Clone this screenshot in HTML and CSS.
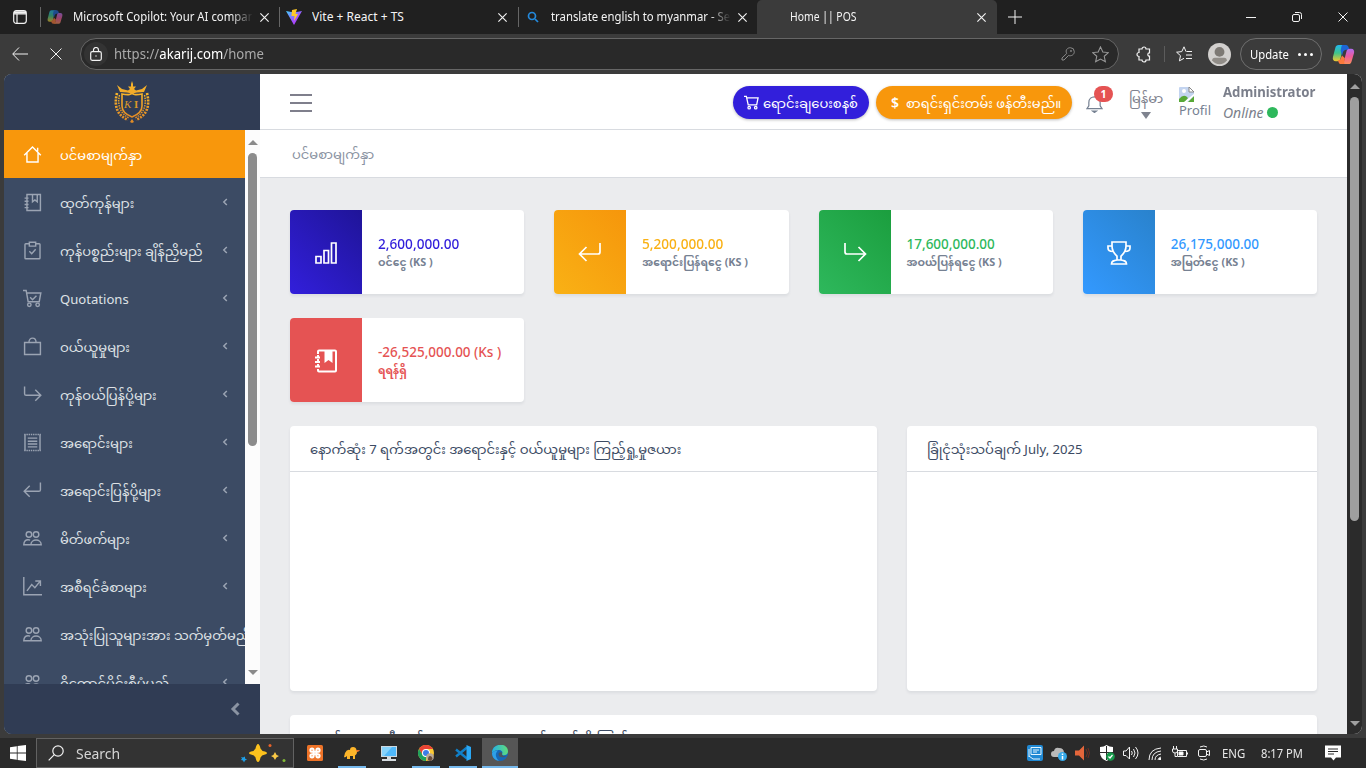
FILE: index.html
```html
<!DOCTYPE html>
<html lang="my">
<head>
<meta charset="utf-8">
<title>Home || POS</title>
<link rel="stylesheet" href="styles.css">
</head>
<body>
<svg class="defs" width="0" height="0">
  <defs>
    <linearGradient id="cpA" x1="0" y1="0" x2="0" y2="1"><stop offset="0" stop-color="#21b8f2"/><stop offset=".5" stop-color="#3fc38a"/><stop offset="1" stop-color="#f2c72f"/></linearGradient>
    <linearGradient id="cpB" x1="0" y1="0" x2="0" y2="1"><stop offset="0" stop-color="#b06cf0"/><stop offset=".5" stop-color="#ee5a9a"/><stop offset="1" stop-color="#fa8f5a"/></linearGradient>
    <linearGradient id="gold" x1="0" y1="0" x2="0" y2="1"><stop offset="0" stop-color="#f8b62a"/><stop offset="1" stop-color="#e08a26"/></linearGradient>
    <linearGradient id="edge" x1="0" y1="0" x2="1" y2="0"><stop offset="0" stop-color="#27b0e4"/><stop offset="1" stop-color="#5fdc7a"/></linearGradient>
    <linearGradient id="vite" x1="0" y1="0" x2="1" y2="1"><stop offset="0" stop-color="#41d1ff"/><stop offset=".6" stop-color="#a44cff"/><stop offset="1" stop-color="#bd34fe"/></linearGradient>
    <symbol id="copilot" viewBox="0 0 24 24">
      <path fill="url(#cpA)" d="M7 2h8c-2 0-3 1-3.500 3L9 16c-.5 2-1.500 3-3.500 3H4c-2.500 0-3.600-2-3-4.500L3.500 5C4 3 5 2 7 2z"/>
      <path fill="#1d66d6" d="M11 2h3.500c2 0 2.500 1.500 3 3l.6 2H15c-2 0-3 1-3.500 2.500L10.500 13 9 8c1-4 .5-5 2-6z"/>
      <path fill="url(#cpB)" d="M17 22H9c2 0 3-1 3.500-3L15 9c.5-2 1.500-3 3.500-3H20c2.500 0 3.600 2 3 4.500L20.500 19c-.5 2-1.500 3-3.500 3z"/>
      <path fill="#fb7a3c" d="M13 22H9.500c-2 0-2.500-1.500-3-3L6 18c2 0 3-1 3.500-3l1-2 3 3c-1 4-.500 5-.500 6z"/>
    </symbol>
    <symbol id="x" viewBox="0 0 12 12"><path d="M1.500 1.500l9 9M10.500 1.500l-9 9"/></symbol>
    <symbol id="book" viewBox="0 0 24 24"><path d="M5 5V2h17v20H5v-2.500M2 6.500h5M2 10.500h5M2 14.500h5M2 18.500h5M5 5v15M12 2v9l3-2.300 3 2.300V2"/></symbol>
    <symbol id="bookFill" viewBox="0 0 24 24"><path d="M4 5V2.500q0-1 1-1h16q1 0 1 1v19q0 1-1 1H5q-1 0-1-1V20" stroke-width="2"/><path d="M1 8.500h5M1 13h5M1 17.500h5" stroke-width="2"/><path d="M4 6v2M4 10v2M4 15v2" stroke-width="2"/><path d="M10.500 2v12l4-3 4 3V2z" fill="#fff" stroke="none"/></symbol>
    <symbol id="people" viewBox="0 0 24 24"><circle cx="7.500" cy="7" r="3.500"/><circle cx="16.500" cy="7" r="3.500"/><path d="M10 20h13c0-8-13-8-13 0zM10 20H1c0-5 2.500-7.200 8-6"/></symbol>
    <symbol id="ret" viewBox="0 0 24 24"><path d="M22 2v9q0 2-2 2H2M8.500 6l-7 7 7 7"/></symbol>
    <symbol id="fwd" viewBox="0 0 24 24"><path d="M2 2v9q0 2 2 2h18M15.500 6l7 7-7 7"/></symbol>
    <symbol id="chev" viewBox="0 0 8 10"><path d="M5.800 2L2.800 5l3 3"/></symbol>
  </defs>
</svg>

<div class="tabs">
  <svg class="workspace" viewBox="0 0 14 14"><rect x=".7" y=".7" width="12.600" height="12.600" rx="2.500"/><path d="M1 4h12M4 4v9" /><path d="M1 2.500h12" stroke-width="2.500"/></svg>
  <div class="tab t1"><svg class="fav dim"><use href="#copilot"/></svg><span class="ttl fade"><b class="w-t1">Microsoft Copilot: Your AI compan</b></span><svg class="ln tx"><use href="#x"/></svg></div>
  <div class="tab t2"><svg class="fav" viewBox="0 0 16 16"><path fill="url(#vite)" d="M0 2l8 14 8-14-8 1.500z"/><path fill="#ffc928" d="M6 1l5-1-1.500 5H12l-4 7 .5-5H5.500z"/></svg><span class="ttl"><b class="w-t2">Vite + React + TS</b></span><svg class="ln tx"><use href="#x"/></svg></div>
  <div class="tab t3"><svg class="fav mag" viewBox="0 0 16 16"><circle cx="7" cy="7" r="3.500"/><path d="M10 10l3 3"/></svg><span class="ttl fade"><b class="w-t3">translate english to myanmar - Se</b></span><svg class="ln tx"><use href="#x"/></svg></div>
  <div class="tab t4 active"><span class="ttl"><b class="w-t4">Home || POS</b></span><svg class="ln tx"><use href="#x"/></svg></div>
  <svg class="ln plus" viewBox="0 0 14 14"><path d="M7 0v14M0 7h14"/></svg>
  <div class="winbtns">
    <svg class="ln" viewBox="0 0 10 10"><path d="M0 5.500h10"/></svg>
    <svg class="ln" viewBox="0 0 10 10"><rect x=".5" y="2.500" width="7" height="7" rx="1.500"/><path d="M3 .5h4.500q2 0 2 2V7"/></svg>
    <svg class="ln" viewBox="0 0 10 10"><path d="M.5 .5l9 9M9.500 .5l-9 9"/></svg>
  </div>
</div>

<div class="toolbar">
  <svg class="ln back" viewBox="0 0 16 14"><path d="M16 7H1M7 .5L.7 7 7 13.500"/></svg>
  <svg class="ln stop" viewBox="0 0 12 12"><path d="M.5 .5l11 11M11.500 .5l-11 11"/></svg>
  <div class="address">
    <span class="lock"><svg class="ln" viewBox="0 0 12 14"><rect x=".7" y="4.700" width="10.600" height="8.600" rx="1.500"/><path d="M3.500 4.500V3a2.500 2.500 0 015 0v1.500"/><path d="M5.500 9h1" stroke-width="1.500"/></svg></span>
    <span class="url"><b class="w-url">https://<i>akarij.com</i>/home</b></span>
    <svg class="ln key" viewBox="0 0 14 14"><path d="M7.500 8.500L3 13H1v-2l4.700-4.500C4 3 6.500 .7 9.300 .7A4 4 0 0113.300 4.700C13.300 7.500 10.500 9.500 7.500 8.500z"/><circle cx="10" cy="4" r=".6"/></svg>
    <svg class="ln star" viewBox="0 0 16 16"><path d="M8 .8l2.200 4.800 5.200.6-3.900 3.500 1.100 5.200L8 12.300l-4.600 2.600 1.100-5.200L.6 6.200l5.200-.6z"/></svg>
  </div>
  <svg class="ln ext" viewBox="0 0 16 16"><path d="M3 2.500h3a2 2 0 014 0h3.500v3.800a1.600 1.600 0 100 3.400v3.800H10a2 2 0 01-4 0H3V10a2 2 0 010-4z"/></svg>
  <i class="tsep"></i>
  <svg class="ln favs" viewBox="0 0 17 16"><path d="M10 5.600L8 .8 5.800 5.600.6 6.200l3.900 3.500-1.100 5.200L8 12.300M10.500 5.500H16M10 9h6M10 12.500h6"/></svg>
  <svg class="avatar" viewBox="0 0 22 22"><circle cx="11" cy="11" r="11" fill="#d2d0ce"/><circle cx="11" cy="8.500" r="4.700" fill="#7d7974"/><path d="M4 16.500q0-2.500 2.500-2.500h9q2.500 0 2.500 2.500c-3 5-11 5-14 0z" fill="#918d88"/></svg>
  <div class="update"><b class="w-upd">Update</b><i></i><i></i><i></i></div>
  <svg class="cop"><use href="#copilot"/></svg>
</div>

<div class="view">
  <aside class="side">
    <div class="brand">
      <svg viewBox="0 0 36 42">
        <g fill="none" stroke="url(#gold)">
          <path stroke-width="1.600" d="M8 13q10 2 10-2q0 4 10 2v12q0 7-10 11Q8 32 8 25z"/>
          <path stroke-width="2.600" stroke-dasharray="2 1.200" d="M3 12Q-2 32 14 39M33 12Q38 32 22 39"/>
          <path stroke-width="1.400" stroke-dasharray="1.500 1" d="M5.500 14Q2 30 15 37M30.500 14Q34 30 21 37"/>
        </g>
        <path fill="url(#gold)" d="M6 11L3 4l5 4 6 1.500 2-1.500-2-2.500h3V3l1-3 1 3v2.500h3L20 8l2 1.500L28 8l5-4-3 7-7 .5-5 1-5-1zM16 41l2-3 2 3-2 1z"/>
        <text x="10" y="27" class="mono">K</text><text x="20" y="27" class="mono up1">I</text>
      </svg>
    </div>
    <div class="navwrap">
      <nav class="nav">
        <a class="on"><svg viewBox="0 0 24 24"><path d="M1.500 13L12 2.500 22.500 13M5 10v11.500h14V10M18.500 8V3.500"/></svg><span><b>ပင်မစာမျက်နှာ</b></span></a>
        <a><svg><use href="#book"/></svg><span><b>ထုတ်ကုန်များ</b></span><svg class="ch"><use href="#chev"/></svg></a>
        <a><svg viewBox="0 0 24 24"><path d="M8 3.500H3.500q-1 0-1 1v17q0 1 1 1h17q1 0 1-1v-17q0-1-1-1H16M8 1.500h8v5H8zM8 13l3 3 5-5.500"/></svg><span><b>ကုန်ပစ္စည်းများ ချိန်ညှိမည်</b></span><svg class="ch"><use href="#chev"/></svg></a>
        <a><svg viewBox="0 0 24 24"><path d="M0 2h4l2.500 14h14L22.500 5H5M9 10.500l3 3 5-5"/><circle cx="8" cy="20" r="2.200"/><circle cx="18.500" cy="20" r="2.200"/></svg><span><b>Quotations</b></span><svg class="ch"><use href="#chev"/></svg></a>
        <a><svg viewBox="0 0 24 24"><path d="M2 7h20v15H2zM7.500 7c0-7.500 9-7.500 9 0"/></svg><span><b>ဝယ်ယူမှုများ</b></span><svg class="ch"><use href="#chev"/></svg></a>
        <a><svg><use href="#fwd"/></svg><span><b>ကုန်ဝယ်ပြန်ပို့များ</b></span><svg class="ch"><use href="#chev"/></svg></a>
        <a><svg viewBox="0 0 24 24"><path d="M2.500 2v20M21.500 2v20"/><path d="M1.500 2h21M1.500 22h21" stroke-dasharray="1.800 1"/><path d="M6 6.500h12M6 10.500h12M6 14h12M6 17.500h12"/></svg><span><b>အရောင်းများ</b></span><svg class="ch"><use href="#chev"/></svg></a>
        <a><svg><use href="#ret"/></svg><span><b>အရောင်းပြန်ပို့များ</b></span><svg class="ch"><use href="#chev"/></svg></a>
        <a><svg><use href="#people"/></svg><span><b>မိတ်ဖက်များ</b></span><svg class="ch"><use href="#chev"/></svg></a>
        <a><svg viewBox="0 0 24 24"><path d="M1 0v22.500h23M5 17.500l6-8 4 4 6.500-8M15.500 5H22v6.500"/></svg><span><b>အစီရင်ခံစာများ</b></span><svg class="ch"><use href="#chev"/></svg></a>
        <a><svg><use href="#people"/></svg><span><b>အသုံးပြုသူများအား သက်မှတ်မည်</b></span></a>
        <a><svg><use href="#people"/></svg><span><b>ဂိုတောင်ပိုင်းစီမံမည်</b></span><svg class="ch"><use href="#chev"/></svg></a>
      </nav>
      <div class="sb light"><i class="up"></i><i class="thumb"></i><i class="down"></i></div>
    </div>
    <div class="minimize"><svg viewBox="0 0 10 14"><path d="M8.500 1.500L3 7l5.500 5.500"/></svg></div>
  </aside>

  <section class="page">
    <header class="head">
      <span class="burger"><i></i><i></i><i></i></span>
      <a class="pill blue"><svg viewBox="0 0 16 16"><path d="M0 1.500h2.500L4.500 10.500h9L15 3H3.500"/><circle cx="5.500" cy="13.500" r="1.300"/><circle cx="12.500" cy="13.500" r="1.300"/></svg><b>ရောင်းချပေးစနစ်</b></a>
      <a class="pill orange"><em>$</em><b>စာရင်းရှင်းတမ်း ဖန်တီးမည်။</b></a>
      <span class="bell"><svg viewBox="0 0 18 20"><path d="M1 15.500h16l-2-3V9c0-8-12-8-12 0v3.500z"/><path d="M7 18h4l-2 1.500z"/></svg><i>1</i></span>
      <span class="lang"><b>မြန်မာ</b><i></i></span>
      <span class="pic"><svg viewBox="0 0 16 16"><path fill="#c3d4f0" d="M0 2q0-1 1-1h9l5 5v9q0 1-1 1H1q-1 0-1-1z"/><circle cx="5" cy="5" r="2" fill="#fff"/><path fill="#57a837" d="M0 16v-3q5-6 9-1l-3 4zM9 16l6-6v6z"/><path fill="#fff" d="M5 16L16 7v2l-8 7z"/><path d="M10 1v5h5z" fill="#fff" stroke="#888"/></svg><em>Profile</em></span>
      <span class="user"><strong><b class="us">Administrator</b></strong><em><b class="ol">Online</b><i></i></em></span>
    </header>
    <div class="crumb"><b>ပင်မစာမျက်နှာ</b></div>
    <main>
      <div class="cards">
        <article class="c-blue"><div><svg viewBox="0 0 24 24"><path d="M2 15.500h5V22H2zM10 9.500h4.500V22H10zM17.500 2H22v20h-4.500z"/></svg></div><p><strong><b class="v1">2,600,000.00</b></strong><small><b>ဝင်ငွေ (KS )</b></small></p></article>
        <article class="c-org"><div><svg><use href="#ret"/></svg></div><p><strong><b class="v1">5,200,000.00</b></strong><small><b>အရောင်းပြန်ရငွေ (KS )</b></small></p></article>
        <article class="c-grn"><div><svg><use href="#fwd"/></svg></div><p><strong><b class="v3">17,600,000.00</b></strong><small><b>အဝယ်ပြန်ရငွေ (KS )</b></small></p></article>
        <article class="c-sky"><div><svg viewBox="0 0 24 24"><path d="M5 1h14v4c0 6-3 8-5 10v4h-4v-4C8 13 5 11 5 5zM5 5H1v2c0 3 2 3.500 5 3.500M19 5h4v2c0 3-2 3.500-5 3.500M4.500 23c0-3 2-3.500 5.500-4h4c3.500.5 5.500 1 5.500 4z"/></svg></div><p><strong><b class="v3">26,175,000.00</b></strong><small><b>အမြတ်ငွေ (KS )</b></small></p></article>
        <article class="c-red"><div><svg><use href="#bookFill"/></svg></div><p><strong><b class="v5">-26,525,000.00 (Ks )</b></strong><small><b>ရရန်ရှိ</b></small></p></article>
      </div>
      <div class="panels">
        <section><h2><b>နောက်ဆုံး 7 ရက်အတွင်း အရောင်းနှင့် ဝယ်ယူမှုများ ကြည့်ရှု့မှုဇယား</b></h2></section>
        <section><h2><b class="h2">ခြုံငုံသုံးသပ်ချက် July, 2025</b></h2></section>
      </div>
      <section class="more"><h2><b>လစဉ် ငွေသားစီးဆင်းမှု ပေးချေမှုများ လက်ရောင်းပို့ ကြည့်ရှု့မှု</b></h2></section>
    </main>
  </section>
  <div class="sb dark"><i class="up"></i><i class="thumb"></i><i class="down"></i></div>
</div>

<footer class="taskbar">
  <span class="start"><svg viewBox="0 0 16 16"><path fill="#fff" d="M0 2.200L6.800 1.200V7.600H0zM7.600 1.100L16 0v7.600H7.600zM0 8.400h6.800v6.400L0 13.800zM7.600 8.400H16V16l-8.400-1.100z"/></svg></span>
  <div class="search">
    <svg class="ln sm" viewBox="0 0 16 16"><circle cx="10" cy="6" r="5.200"/><path d="M6.300 9.700L.7 15.300"/></svg>
    <span><b class="sr">Search</b></span>
    <svg class="spark" viewBox="0 0 48 20"><path fill="#fdc21d" d="M19 1q1.500 0 2.500 4.500Q22.500 8 26 8.500q2 .5 2 1.500t-2 1.500q-3.500.5-4.500 3Q20.500 19 19 19t-2.500-4.500q-1-2.500-4.500-3-2-.5-2-1.500t2-1.500q3.500-.5 4.500-3Q17.500 1 19 1z"/><path fill="#f9c846" d="M36 9q.8 3.200 4 4-3.200.8-4 4-.8-3.200-4-4 3.200-.8 4-4z"/><path fill="#1ea0e8" d="M2 14l2 .500 2-1v2l2 1-2 1-1 2-1-2-2-.5 1-1.500z"/><circle cx="31" cy="2.500" r="1.500" fill="#e9622a"/><circle cx="45" cy="17.500" r="1.500" fill="#80b935"/></svg>
  </div>
  <div class="apps">
    <span><svg viewBox="0 0 16 16"><rect width="16" height="16" rx="1.500" fill="#ee7328"/><path fill="none" stroke="#fff" stroke-width="2" d="M5.800 6.800H5a1.600 1.600 0 111.600-1.600v5.600A1.600 1.600 0 115 9.200h6a1.600 1.600 0 11-1.600 1.600V5.200A1.600 1.600 0 1111 6.800H5"/></svg></span>
    <span class="run"><svg viewBox="0 0 16 16"><path fill="#fdb52a" d="M1 8q2-4 5-3 0-3 3-3 3 0 3.500 3l3.500.5-3 1.500q0 3-2 3.500V14H9v-3H6v3H3v-3q-2 2-3 1z"/><path fill="#e9622a" d="M12 5l4 .5-3 1.500z"/></svg></span>
    <span><svg viewBox="0 0 16 16"><path fill="#cdd8df" d="M0 1h16v11H0z"/><path fill="#4fb8fa" d="M1 2h14v9H1z"/><path fill="#86d3fc" d="M1 2h10L3 11H1z"/><path fill="#d6dce0" d="M6 12h4v2h5v2H1v-2h5z"/></svg></span>
    <span class="run"><svg viewBox="0 0 16 16"><circle cx="8" cy="8" r="8" fill="#fcc934"/><path fill="#ea4335" d="M1.070 4a8 8 0 0113.860 0H8L4.500 10z"/><path fill="#1fa15d" d="M1.070 4l3.500 6 3.500 2L8 16A8 8 0 011.070 4z"/><circle cx="8" cy="8" r="4" fill="#fff"/><circle cx="8" cy="8" r="3" fill="#3b7de8"/><circle cx="12" cy="12" r="3.800" fill="#b9a896"/><path fill="#6a4b3a" d="M10 15q0-4 2-4t2.500 3l-2 2z"/></svg></span>
    <span class="run"><svg viewBox="0 0 16 16"><path fill="none" stroke="#1180c9" stroke-width="2.400" d="M12 2.500L1 11.500M12 13.500L1 4.500"/><path fill="#2aa8f5" d="M11.500 0L16 2v12l-4.500 2z"/></svg></span>
    <span class="cur"><svg viewBox="0 0 16 16"><circle cx="8" cy="8" r="8" fill="#1667b8"/><path fill="url(#edge)" d="M0 8C0-2.500 16-3 16 6.500c0 4-6 5-6 2.500 1-1 .5-4-3-4C3 5 1 6.500 0 8z"/><path fill="#2fa0e8" d="M0 8q2-3 6-2.500C3 8 3 12 7 15.900 2.500 15.500 0 12 0 8z"/><path fill="#4a5560" d="M6.500 8.500q1-2 3.500-1c-.5 3 1 4.500 5 3.500-4 2.500-9 1.500-8.500-2.500z"/></svg></span>
  </div>
  <div class="tray">
    <svg viewBox="0 0 16 16"><rect width="16" height="16" rx="2" fill="#2089d4"/><path fill="none" stroke="#e4f5ff" d="M4 2.500h10v7H4zM6 5h6M6 7h4M2 11l4 3h7M2 4v8"/></svg>
    <svg viewBox="0 0 16 16"><path fill="#b9b9b9" d="M0 9q0-3 3-3 1-4 5-3 5 0 5 5l-3 4H3q-3 0-3-3z"/><circle cx="11.500" cy="11.500" r="4.500" fill="#35a9ea"/><path stroke="#fff" stroke-width="1.500" d="M11.500 11v3.500M11.500 8.500V10"/></svg>
    <svg viewBox="0 0 16 16"><path fill="#e4663b" d="M0 5.500h4l5-5v15l-5-5H0z"/><path fill="none" stroke="#6d2f22" d="M11 4q3 4 0 8M13 3q3 5 0 10"/></svg>
    <svg viewBox="0 0 16 16"><path fill="#fff" d="M7.500 0q3 2 6.500 2v6q0 5-6.500 8Q1 13 1 8V2q4 0 6.500-2z"/><path stroke="#2a2a2a" d="M7.500 1v14M1 7.500h13"/><circle cx="11.500" cy="11.500" r="4.300" fill="#169a4b"/><path fill="none" stroke="#fff" stroke-width="1.200" d="M9.500 11.500l1.500 1.500 2.500-3"/></svg>
    <svg class="ln" viewBox="0 0 16 16"><path d="M.5 6H3l3.500-4v12L3 10.500H.5zM8.500 6q1.500 2 0 4M10.500 4q3 4 0 8M12.500 2q5 6 0 12"/></svg>
    <svg class="ln" viewBox="0 0 16 16"><path d="M2 15Q2 4 14 3M5 15q0-8 9-9M8 15q0-5 6-6M11 15q0-2 3-3"/><path d="M12 14h2" stroke-width="2"/></svg>
    <svg class="ln" viewBox="0 0 16 16"><path d="M5.500 5.500h9v6h-9zM15.500 7.500v2M1.500 1v3M4.500 1v3M.5 4h5v2q0 2-2.500 2T.5 6zM3 8v3.500h2"/><path fill="#fff" d="M7 7h4v3H7z"/></svg>
    <svg class="ln" viewBox="0 0 16 16"><rect x="2.500" y="4.500" width="8" height="7" rx="1.500"/><path d="M10.500 7l3-1.500v5l-3-1.500M4 2q4-2 7 0M4 14q4 2 7 0"/></svg>
    <span class="eng"><b class="en">ENG</b></span>
    <span class="time"><b class="tm">8:17 PM</b></span>
    <svg class="note" viewBox="0 0 16 16"><path fill="#fff" d="M0 .5h16v12h-5L8.500 15.500 6 12.500H0z"/><path stroke="#2a2a2a" d="M3 4h10M3 6.500h10M3 9h6"/></svg>
  </div>
</footer>
</body>
</html>
```
FILE: styles.css
```css
* { box-sizing: border-box; }
body { margin: 0; width: 1366px; height: 768px; overflow: hidden; background: #3b3b3b; display: flex; flex-direction: column; font-family: "Noto Sans", "Noto Sans Myanmar", "Padauk", sans-serif; font-size: 13px; }
b { font-weight: inherit; display: inline-block; white-space: nowrap; transform-origin: 0 50%; }
i, em { font-style: normal; }
svg { display: block; flex: none; }
.defs { position: absolute; }
.ln { fill: none; stroke: #f2f2f2; stroke-width: 1; }

/* horizontal condensing for chrome labels */
.w-t1, .w-t3 { transform: scaleX(.945); }
.w-t4 { transform: scaleX(.865); }
.w-url { transform: scaleX(.938); }
.w-upd { transform: scaleX(.94); }
.us { transform: scaleX(.94); }
.tm { transform: scaleX(.93); }
.en { transform: scaleX(.95); }
.sr { transform: scaleX(.93); }
.v1 { transform: scaleX(1.01); }

.tabs { height: 34px; flex: none; background: #202020; display: flex; align-items: center; color: #f4f4f4; font-size: 12px; }
.workspace { width: 14px; height: 14px; margin: 0 13px 0 13px; fill: none; stroke: #f2f2f2; stroke-width: 1.2; }
.tab { display: flex; align-items: center; height: 34px; padding-left: 7px; position: relative; }
.tab:not(.active)::before { content: ""; position: absolute; left: 0; top: 7px; height: 20px; width: 1px; background: #666; }
.t1 { width: 239px; } .t2 { width: 239px; } .t3 { width: 238px; }
.t4 { width: 240px; padding-left: 33px; }
.active { background: #3b3b3b; margin-left: 1px; border-radius: 5px 5px 0 0; }
.fav { width: 16px; height: 16px; margin-right: 10px; }
.dim { opacity: .6; }
.mag { fill: none; stroke: #2389dc; stroke-width: 1.7; }
.ttl { flex: 1; line-height: 34px; overflow: hidden; white-space: nowrap; }
.fade { flex: none; width: 179px; margin-right: 8px; overflow: visible; -webkit-mask-image: linear-gradient(90deg, #000 158px, transparent 180px); mask-image: linear-gradient(90deg, #000 158px, transparent 180px); }
.tx { width: 11px; height: 11px; margin-right: 10px; stroke-width: 1.3; }
.t1 .tx, .t3 .tx { margin: 0; margin-left: -1px; }
.plus { width: 14px; height: 14px; margin-left: 11px; }
.winbtns { margin-left: auto; display: flex; gap: 36px; padding-right: 18px; }
.winbtns svg { width: 10px; height: 10px; }

.toolbar { height: 40px; flex: none; background: #3b3b3b; display: flex; align-items: center; padding: 0 0 0 12px; }
.back { width: 16px; height: 14px; }
.stop { width: 12px; height: 12px; margin-left: 22px; }
.address { width: 1039px; height: 32px; margin-left: 18px; border: 1px solid #666; border-radius: 16px; background: #292929; display: flex; align-items: center; padding-left: 3px; }
.lock { width: 24px; height: 24px; border-radius: 50%; background: #333; display: grid; place-items: center; }
.lock svg { width: 12px; height: 14px; stroke-width: 1.2; }
.url { flex: 1; margin-left: 6px; font-size: 14px; line-height: 30px; color: #aaa; }
.url i { color: #fff; }
.key { width: 14px; height: 14px; stroke: #8a8a8a; }
.star { width: 17px; height: 17px; margin: 0 9px 0 17px; stroke: #999; }
.ext { width: 16px; height: 17px; margin-left: 17px; stroke-width: 1.2; }
.tsep { width: 1px; height: 16px; background: #5c5c5c; margin: 0 11px 0 12px; }
.favs { width: 17px; height: 16px; }
.avatar { width: 23px; height: 23px; margin: 0 9px 0 15px; }
.update { width: 82px; height: 32px; border: 1px solid #6e6e6e; border-radius: 16px; display: flex; align-items: center; color: #fff; font-size: 12px; padding-left: 9px; }
.update b { width: 48px; }
.update i { width: 3px; height: 3px; border-radius: 50%; background: #fff; margin-right: 3px; }
.cop { width: 23px; height: 23px; margin-left: 10px; }

.view { height: 660px; width: 1358px; flex: none; margin-left: 4px; display: flex; border-radius: 8px; overflow: hidden; background: #ebecee; }
.side { width: 256px; display: flex; flex-direction: column; background: #3c4b64; flex: none; }
.brand { height: 56px; flex: none; background: #303c54; display: flex; justify-content: center; padding-top: 7px; }
.brand svg { width: 36px; height: 42px; margin-right: 1px; }
.mono { font: italic 11px "Liberation Serif", serif; fill: #d9962a; }
.up1 { font-style: normal; font-weight: 700; }
.navwrap { height: 554px; display: flex; overflow: hidden; }
.nav { width: 241px; overflow: hidden; }
.nav a { height: 48px; display: flex; align-items: center; padding: 0 16px 0 19px; color: #dfe2e6; font-size: 13.100px; }
.nav a > svg { width: 19px; height: 19px; fill: none; stroke: #9ba4b3; stroke-width: 1.8; }
.nav a span { width: 160px; margin-left: 18px; line-height: 48px; height: 48px; white-space: nowrap; padding-top: 1px; }
.nav a > svg.ch { width: 8px; height: 10px; stroke-width: 1.5; margin-left: 1px; }
.nav .on { background: #f8970c; color: #fff; }
.nav a.on > svg { stroke: #fff; }
.sb { width: 15px; display: flex; flex-direction: column; align-items: center; flex: none; }
.light { background: #fcfcfc; padding: 10px 0 9px; }
.dark { background: #2b2b2b; padding: 10px 0 8px; }
.up { border: 5px solid transparent; border-top: 0; border-bottom: 5px solid #8b8b8b; }
.down { border: 5px solid transparent; border-bottom: 0; border-top: 5px solid #8b8b8b; margin-top: auto; }
.thumb { width: 9px; border-radius: 5px; background: #8b8b8b; margin-top: 8px; }
.light .thumb { height: 293px; }
.dark .thumb { height: 424px; background: #9f9f9f; }
.dark .up { border-bottom-color: #9f9f9f; } .dark .down { border-top-color: #9f9f9f; }
.minimize { height: 50px; background: #303c54; display: flex; justify-content: flex-end; align-items: center; padding-right: 20px; padding-bottom: 1px; }
.minimize svg { width: 10px; height: 14px; fill: none; stroke: #8a93a2; stroke-width: 3; }

.page { width: 1087px; overflow: hidden; }
.head { height: 56px; background: #fff; border-bottom: 1px solid #d8dbe0; display: flex; align-items: center; padding: 2px 0 0 30px; }
.burger { width: 22px; height: 18px; display: flex; flex-direction: column; justify-content: space-between; margin-right: 421px; }
.burger i { height: 2px; background: #7f7f8c; }
.pill { height: 33px; border-radius: 17px; color: #fff; display: flex; align-items: center; font-size: 13.100px; white-space: nowrap; box-shadow: 0 1px 3px #0004; }
.pill b { line-height: 34px; }
.blue { width: 136px; background: #321fdb; padding-left: 11px; margin-right: 7px; }
.blue svg { width: 15px; height: 15px; fill: none; stroke: #fff; stroke-width: 1.4; margin-right: 4px; }
.orange { width: 196px; background: #f8970c; padding-left: 15px; }
.orange em { font-weight: 600; width: 15px; font-size: 14px; }
.bell { width: 28px; height: 36px; margin-left: 14px; position: relative; }
.bell svg { width: 17px; height: 19px; margin-top: 9px; fill: none; stroke: #768192; stroke-width: 1.3; }
.bell i { position: absolute; left: 8px; top: 1px; width: 19px; height: 16px; border-radius: 8px; background: #e55353; color: #fff; font-weight: 700; font-size: 10.500px; line-height: 16px; text-align: center; }
.lang { width: 34px; height: 40px; margin-left: 15px; display: flex; flex-direction: column; color: #7f838f; }
.lang b { height: 28px; line-height: 30px; font-size: 13.100px; }
.lang i { align-self: center; border: 5px solid transparent; border-bottom: 0; border-top: 7px solid #7f838f; margin-top: 1px; }
.pic { width: 32px; height: 34px; margin-left: 16px; overflow: hidden; }
.pic svg { width: 16px; height: 16px; }
.pic em { display: block; width: 32px; overflow: hidden; line-height: 17px; font-size: 13px; color: #768192; }
.user { margin-left: 12px; color: #7b7f8b; display: flex; flex-direction: column; font-size: 14px; }
.user strong { line-height: 20px; height: 20px; }
.user em { display: flex; align-items: center; line-height: 21px; height: 22px; font-style: italic; }
.ol { width: 44px; }
.user em i { width: 11px; height: 11px; border-radius: 50%; background: #2eb85c; }
.crumb { height: 48px; background: #fff; border-bottom: 1px solid #d8dbe0; padding-left: 32px; line-height: 48px; color: #8a93a2; font-size: 13.100px; }
main { padding: 32px 30px 0; }
.cards { display: grid; grid-template-columns: repeat(4, 234.250px); gap: 24px 30px; }
article { height: 84px; display: flex; background: #fff; border-radius: 4px; overflow: hidden; }
article, .panels section, .more { box-shadow: 0 2px 3px #3c4b6418; }
article div { width: 72px; display: grid; place-items: center; padding-top: 2px; }
article svg { width: 24px; height: 24px; fill: none; stroke: #fff; stroke-width: 1.7; }
article p { margin: 0; padding: 25px 0 0 16px; display: flex; flex-direction: column; }
article strong { font-size: 13.500px; font-weight: 500; line-height: 18px; height: 18px; }
article small { font-size: 10.800px; font-weight: 700; color: #768192; line-height: 18px; height: 18px; }
.c-blue div { background: linear-gradient(45deg, #321fdb, #1f1498); } .c-blue strong { color: #321fdb; }
.c-org div { background: linear-gradient(45deg, #f9b115, #f6960b); } .c-org strong { color: #f9b115; }
.c-grn div { background: linear-gradient(45deg, #2eb85c, #1b9e3e); } .c-grn strong { color: #2eb85c; }
.c-sky div { background: linear-gradient(45deg, #39f, #2982cc); } .c-sky strong { color: #39f; }
.c-red div { background: #e55353; } .c-red strong, .c-red small { color: #e55353; }
.panels { display: grid; grid-template-columns: 587px 410px; gap: 30px; margin-top: 24px; }
.panels section { height: 265px; background: #fff; border-radius: 4px; }
h2 { margin: 0; height: 46px; border-bottom: 1px solid #d8dbe0; padding-left: 20px; line-height: 46px; font-size: 13.150px; font-weight: 400; color: #3c4b64; }
.more { margin-top: 24px; height: 100px; background: #fff; border-radius: 4px; }

.taskbar { height: 30px; margin-top: 4px; flex: none; background: #2a2a2a; display: flex; color: #e8e8e8; }
.start { width: 36px; display: grid; place-items: center; }
.start svg { width: 16px; height: 16px; }
.search { width: 258px; border: 1px solid #626262; background: #333; display: flex; align-items: center; }
.sm { width: 16px; height: 16px; margin: 0 12px 0 11px; stroke-width: 1.2; }
.search span { flex: 1; font-size: 15px; line-height: 28px; color: #d6d6d6; }
.spark { width: 48px; height: 20px; margin-right: 6px; }
.apps { display: flex; margin-left: 3px; gap: 1px; }
.apps span { width: 36px; height: 30px; display: grid; place-items: center; }
.apps svg { width: 16px; height: 16px; }
.run { background: linear-gradient(#76b9ed, #76b9ed) 50% 100% / 28px 2px no-repeat; }
.cur { background: #565656; box-shadow: inset 0 -2px #76b9ed; }
.tray { margin-left: auto; display: flex; align-items: center; padding-right: 25px; font-size: 12px; }
.tray > svg { width: 16px; height: 16px; margin-right: 8.200px; }
.eng { margin-left: 2px; width: 39px; }
.time { width: 64px; }
.tray > .note { margin-right: 0; }
```
